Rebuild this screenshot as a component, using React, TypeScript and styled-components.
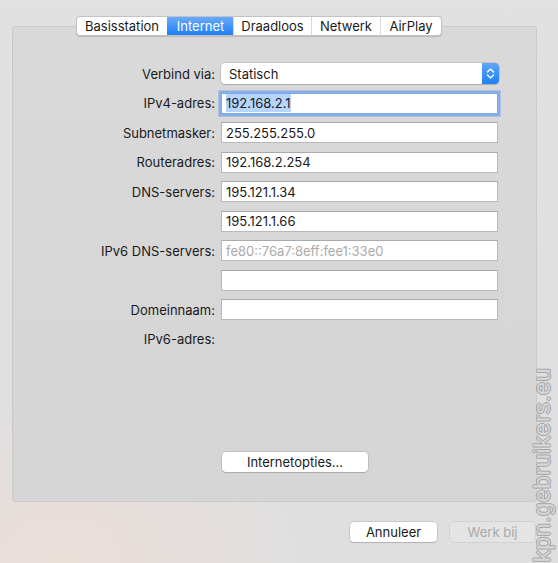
import React from 'react'
import styled, { createGlobalStyle } from 'styled-components'

const GlobalStyle = createGlobalStyle`
  html, body {
    margin: 0;
    padding: 0;
  }
  body {
    font-family: 'Inter', 'Liberation Sans', sans-serif;
    -webkit-font-smoothing: antialiased;
  }
`

const Window = styled.div`
  position: relative;
  width: 558px;
  height: 563px;
  overflow: hidden;
  box-sizing: border-box;
  padding-top: 16px;
  background:
    radial-gradient(ellipse 260px 180px at 60px 560px, rgba(236, 222, 216, 0.9), rgba(236, 222, 216, 0) 100%),
    linear-gradient(180deg, #e1e1e2 0%, #dfdfe0 100%);
  display: flex;
  flex-direction: column;
`

const TabBar = styled.div`
  position: relative;
  z-index: 1;
  align-self: flex-start;
  margin-left: 76px;
  display: flex;
  height: 20px;
  background: #ffffff;
  border: 1px solid #c3c3c4;
  border-radius: 4px;
  box-shadow: 0 0.5px 1px rgba(0, 0, 0, 0.15);
  overflow: hidden;
  box-sizing: border-box;
`

const Tab = styled.div<{ $active?: boolean; $w: number }>`
  width: ${p => p.$w}px;
  display: flex;
  align-items: center;
  justify-content: center;
  font-size: 13px;
  color: ${p => (p.$active ? '#ffffff' : '#1a1a1a')};
  background: ${p => (p.$active ? 'linear-gradient(180deg, #69abf9 0%, #1d7ff5 100%)' : 'transparent')};
  border-left: 1px solid ${p => (p.$active ? 'transparent' : '#dadada')};
  box-sizing: border-box;
  &:first-child {
    border-left: none;
  }
`

const Panel = styled.div`
  margin: -10px 21px 0 12px;
  height: 476px;
  box-sizing: border-box;
  background: linear-gradient(180deg, #d9d9da 0%, #d5d5d6 100%);
  border: 1px solid #cbcbcc;
  border-radius: 3px;
  padding-top: 36px;
  display: flex;
  flex-direction: column;
`

const Form = styled.div`
  display: grid;
  grid-template-columns: 202px 278px;
  column-gap: 6px;
  row-gap: 8.5px;
`

const Label = styled.div`
  height: 21px;
  display: flex;
  align-items: center;
  justify-content: flex-end;
  font-size: 13px;
  color: #1a1a1a;
  grid-column: 1;
`

const Field = styled.div<{ $focused?: boolean; $disabled?: boolean }>`
  grid-column: 2;
  width: 277px;
  height: 21px;
  box-sizing: border-box;
  display: flex;
  align-items: center;
  padding-left: 4px;
  background: #ffffff;
  border: 1px solid ${p => (p.$focused ? '#7fa9e3' : '#b9b9b9')};
  border-top-color: ${p => (p.$focused ? '#7fa9e3' : '#a9a9a9')};
  box-shadow: ${p => (p.$focused ? '0 0 0 2.5px rgba(108, 160, 236, 0.75)' : 'none')};
  font-size: 13px;
  color: ${p => (p.$disabled ? '#ababab' : '#1a1a1a')};
`

const Selected = styled.span`
  background: #b5d5fd;
  padding: 1px 0;
`

const Select = styled.div`
  grid-column: 2;
  width: 278px;
  height: 21px;
  box-sizing: border-box;
  display: flex;
  align-items: center;
  background: #ffffff;
  border-radius: 4px;
  box-shadow: 0 0 0 0.5px rgba(0, 0, 0, 0.18), 0 1px 1px rgba(0, 0, 0, 0.12);
  font-size: 13px;
  color: #1a1a1a;
  overflow: hidden;
`

const SelectText = styled.span`
  flex: 1;
  padding-left: 8px;
`

const Stepper = styled.div`
  width: 17px;
  height: 100%;
  display: flex;
  align-items: center;
  justify-content: center;
  background: linear-gradient(180deg, #5fa6f8 0%, #1e7ff4 100%);
`

const Spacer = styled.div`
  grid-column: 1;
  height: 21px;
`

const OptionsRow = styled.div`
  margin-top: 102px;
  padding-left: 209px;
`

const Button = styled.div<{ $w: number; $disabled?: boolean }>`
  width: ${p => p.$w}px;
  height: 20px;
  box-sizing: border-box;
  display: flex;
  align-items: center;
  justify-content: center;
  font-size: 13px;
  color: ${p => (p.$disabled ? '#a9a9a9' : '#1a1a1a')};
  background: ${p => (p.$disabled ? '#e4e4e5' : '#ffffff')};
  border-radius: 4px;
  box-shadow: ${p =>
    p.$disabled
      ? '0 0 0 0.5px rgba(0, 0, 0, 0.12)'
      : '0 0 0 0.5px rgba(0, 0, 0, 0.2), 0 1px 1px rgba(0, 0, 0, 0.12)'};
`

const Footer = styled.div`
  display: flex;
  justify-content: flex-end;
  gap: 13px;
  margin-top: 20px;
  padding-right: 23px;
`

// watermark stamped over the screenshot, reads bottom to top
const Watermark = styled.div`
  position: absolute;
  right: 4px;
  bottom: 1px;
  writing-mode: vertical-rl;
  transform: rotate(180deg);
  font-family: 'Liberation Sans', sans-serif;
  font-size: 24px;
  letter-spacing: 0.2px;
  line-height: 1;
  color: #d6d6d7;
  text-shadow: 1px 0 0 #a3a3a4, -1px 0 0 #a3a3a4, 0 1px 0 #a3a3a4, 0 -1px 0 #a3a3a4;
  pointer-events: none;
`

const tabs = [
  { name: 'Basisstation', w: 90 },
  { name: 'Internet', w: 66, active: true },
  { name: 'Draadloos', w: 78 },
  { name: 'Netwerk', w: 69 },
  { name: 'AirPlay', w: 61 },
]

const fields = [
  { label: 'Subnetmasker:', value: '255.255.255.0' },
  { label: 'Routeradres:', value: '192.168.2.254' },
  { label: 'DNS-servers:', value: '195.121.1.34' },
  { label: '', value: '195.121.1.66' },
  { label: 'IPv6 DNS-servers:', value: 'fe80::76a7:8eff:fee1:33e0', disabled: true },
  { label: '', value: '' },
  { label: 'Domeinnaam:', value: '' },
]

const App: React.FC = () => {
  return (
    <Window>
      <GlobalStyle />
      <TabBar>
        {tabs.map(t => (
          <Tab key={t.name} $w={t.w} $active={t.active}>{t.name}</Tab>
        ))}
      </TabBar>
      <Panel>
        <Form>
          <Label>Verbind via:</Label>
          <Select>
            <SelectText>Statisch</SelectText>
            <Stepper>
              <svg width="9" height="13" viewBox="0 0 9 13">
                <path d="M1.5 5 L4.5 2 L7.5 5 M1.5 8 L4.5 11 L7.5 8" fill="none" stroke="#ffffff" strokeWidth="1.4" strokeLinecap="round" strokeLinejoin="round" />
              </svg>
            </Stepper>
          </Select>
          <Label>IPv4-adres:</Label>
          <Field $focused><Selected>192.168.2.1</Selected></Field>
          {fields.map((f, i) => (
            <React.Fragment key={i}>
              {f.label ? <Label>{f.label}</Label> : <Spacer />}
              <Field $disabled={f.disabled}>{f.value}</Field>
            </React.Fragment>
          ))}
          <Label>IPv6-adres:</Label>
        </Form>
        <OptionsRow>
          <Button $w={146}>Internetopties...</Button>
        </OptionsRow>
      </Panel>
      <Footer>
        <Button $w={87}>Annuleer</Button>
        <Button $w={85} $disabled>Werk bij</Button>
      </Footer>
      <Watermark>kpn.gebruikers.eu</Watermark>
    </Window>
  )
}

export default App
